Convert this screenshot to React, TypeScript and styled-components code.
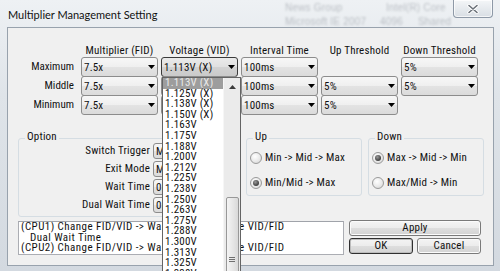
import React from "react";
import styled, { createGlobalStyle } from "styled-components";

const uiFont = `"Liberation Sans Narrow", "Roboto Condensed", "DejaVu Sans Condensed", "Liberation Sans", sans-serif`;

const GlobalStyle = createGlobalStyle`
  html, body {
    margin: 0;
    padding: 0;
  }

  body {
    width: 500px;
    height: 271px;
    overflow: hidden;
    background: #d7dde4;
    font-family: ${uiFont};
    font-size: 11px;
    letter-spacing: 0.2px;
    color: #111;
  }
`;

const Window = styled.div`
  position: relative;
  width: 500px;
  height: 271px;
  box-sizing: border-box;
  display: flex;
  flex-direction: column;
  padding: 0 6px 5px 7px;
  background: linear-gradient(180deg, #eef1f4 0%, #dfe4e9 35%, #d3d9e0 100%);
  overflow: hidden;
`;

const TitleBar = styled.div`
  height: 27px;
  display: flex;
  align-items: flex-start;
  flex: none;
`;

const Title = styled.div`
  flex: none;
  width: 152px;
  padding-left: 1px;
  font-family: "Lato", "Noto Sans", sans-serif;
  font-size: 11px;
  letter-spacing: 0;
  line-height: 29px;
  color: #111;
  white-space: nowrap;
`;

const Backdrop = styled.div`
  flex: 1;
  display: grid;
  grid-template-columns: 125px 95px 1fr;
  grid-auto-rows: 14px;
  padding-top: 1px;
  font-family: "Liberation Sans", sans-serif;
  font-size: 10px;
  line-height: 14px;
  color: #7d838b;
  opacity: 0.45;
  filter: blur(1.3px);
  white-space: nowrap;
  overflow: hidden;
`;

const CloseButton = styled.div`
  flex: none;
  width: 40px;
  height: 18px;
  margin-right: 1px;
  box-sizing: border-box;
  border: 1px solid #8e99a7;
  border-top: none;
  border-radius: 0 0 4px 4px;
  background: linear-gradient(180deg, #f4f6f8 0%, #e6eaee 50%, #d9dee4 100%);
  box-shadow: inset 0 0 0 1px rgba(255, 255, 255, 0.7);
  display: flex;
  align-items: center;
  justify-content: center;
`;

const Client = styled.div`
  flex: 1;
  position: relative;
  box-sizing: border-box;
  border: 1px solid #98a2ad;
  background: #f0f0f0;
  display: flex;
  flex-direction: column;
`;

const SettingsGrid = styled.div`
  display: grid;
  grid-template-columns: 64px repeat(5, 77px);
  grid-template-rows: 13px repeat(3, 19px);
  column-gap: 3px;
  padding: 16px 0 0 6px;
`;

const ColumnHeading = styled.div`
  text-align: center;
  line-height: 13px;
  white-space: nowrap;
`;

const RowLabel = styled.div`
  text-align: right;
  padding-right: 4px;
  line-height: 19px;
  white-space: nowrap;
  letter-spacing: 0;
`;

const Combo = styled.div<{ $focused?: boolean; $height?: number }>`
  position: relative;
  height: ${({ $height }) => $height ?? 20}px;
  box-sizing: border-box;
  border: 1px solid ${({ $focused }) => ($focused ? "#3a3a3a" : "#8c8c8c")};
  border-radius: 3px;
  background: ${({ $focused }) =>
    $focused
      ? "linear-gradient(180deg, #eaeaea 0%, #e0e0e0 50%, #d2d2d2 51%, #cacaca 100%)"
      : "linear-gradient(180deg, #f7f7f7 0%, #efefef 50%, #e3e3e3 51%, #dbdbdb 100%)"};
  display: flex;
  align-items: center;
  padding: 0 2px 0 2px;
  white-space: nowrap;

  span {
    flex: 1;
    overflow: hidden;
  }
`;

const ListPopup = styled.div`
  position: absolute;
  top: calc(100% + 1px);
  left: 0;
  width: 79px;
  height: 200px;
  box-sizing: border-box;
  border: 1px solid #646464;
  background: #fff;
  display: flex;
  z-index: 10;
`;

const Options = styled.ul`
  flex: 1;
  margin: 0;
  padding: 0;
  list-style: none;
  overflow: hidden;
`;

const OptionItem = styled.li<{ $selected?: boolean }>`
  height: 10.6px;
  line-height: 10.6px;
  padding-left: 2px;
  white-space: nowrap;
  background: ${({ $selected }) => ($selected ? "#9d9d9d" : "transparent")};
  color: ${({ $selected }) => ($selected ? "#e9e9e9" : "#111")};
`;

const ScrollBar = styled.div`
  width: 17px;
  flex: none;
  background: #ebebeb;
  border-left: 1px solid #f6f6f6;
  box-sizing: border-box;
  display: flex;
  flex-direction: column;
  align-items: center;
`;

const ScrollArrow = styled.div`
  height: 17px;
  flex: none;
  display: flex;
  align-items: center;
  justify-content: center;
`;

const ScrollThumb = styled.div`
  margin-top: 102px;
  width: 13px;
  height: 130px;
  flex: none;
  box-sizing: border-box;
  border: 1px solid #989898;
  border-radius: 2px;
  background: linear-gradient(90deg, #f4f4f4 0%, #e6e6e6 55%, #d9d9d9 100%);
  display: flex;
  justify-content: center;
  padding-top: 59px;
`;

const GroupRow = styled.div`
  display: flex;
  align-items: flex-start;
  gap: 6px;
  margin: 24px 0 0 10px;
`;

const Group = styled.div<{ $width: number; $height: number }>`
  width: ${({ $width }) => $width}px;
  height: ${({ $height }) => $height}px;
  box-sizing: border-box;
  border: 1px solid #d5dde3;
  border-radius: 3px;
  padding-left: 2px;
`;

const Caption = styled.div`
  width: fit-content;
  margin: -8px 0 0 4px;
  padding: 0 2px;
  line-height: 12px;
  background: #f0f0f0;
`;

const OptionGrid = styled.div`
  display: grid;
  grid-template-columns: 124px 80px;
  grid-auto-rows: 16px;
  column-gap: 3px;
  row-gap: 2px;
  padding-left: 5px;
`;

const OptionLabel = styled.div`
  text-align: right;
  line-height: 16px;
  white-space: nowrap;
`;

const RadioList = styled.div`
  padding-top: 2px;
`;

const RadioRow = styled.label`
  height: 25px;
  display: flex;
  align-items: center;
  gap: 3px;
  padding-left: 1px;
  white-space: nowrap;
`;

const RadioDot = styled.span<{ $checked?: boolean }>`
  width: 12px;
  height: 12px;
  box-sizing: border-box;
  border-radius: 50%;
  border: 1px solid #9a9a9a;
  background: radial-gradient(circle at 40% 35%, #ffffff 0%, #e9e9e9 55%, #cfcfcf 100%);
  display: flex;
  align-items: center;
  justify-content: center;

  &::after {
    content: "";
    width: 6px;
    height: 6px;
    border-radius: 50%;
    background: radial-gradient(circle at 40% 35%, #9a9a9a 0%, #4a4a4a 60%, #2c2c2c 100%);
    display: ${({ $checked }) => ($checked ? "block" : "none")};
  }
`;

const BottomRow = styled.div`
  display: flex;
  align-items: flex-start;
  gap: 5px;
  margin: 3px 0 0 10px;
`;

const LogBox = styled.div`
  margin-top: 1px;
  width: 326px;
  height: 34px;
  box-sizing: border-box;
  border: 1px solid #abadb3;
  border-top-color: #a0a3aa;
  background: #fff;
  padding: 0 0 0 2px;
  overflow: hidden;
  letter-spacing: 0.45px;
`;

const LogLine = styled.div<{ $indent?: boolean }>`
  height: 10.6px;
  line-height: 10.6px;
  white-space: pre;
  padding-left: ${({ $indent }) => ($indent ? 9 : 0)}px;
`;

const ButtonGrid = styled.div`
  display: grid;
  grid-template-columns: 64px 64px;
  grid-auto-rows: 16px;
  column-gap: 4px;
  row-gap: 2px;
`;

const Button = styled.div<{ $wide?: boolean; $default?: boolean }>`
  grid-column: ${({ $wide }) => ($wide ? "1 / span 2" : "auto")};
  box-sizing: border-box;
  border: 1px solid ${({ $default }) => ($default ? "#2f2f2f" : "#7a7a7a")};
  border-radius: 3px;
  background: linear-gradient(180deg, #f4f4f4 0%, #ececec 50%, #dedede 51%, #d3d3d3 100%);
  box-shadow: inset 0 0 0 1px ${({ $default }) => ($default ? "#bcbcbc" : "#fbfbfb")};
  text-align: center;
  line-height: 14px;
  white-space: nowrap;
`;

const voltages = [
  "1.113V (X)",
  "1.125V (X)",
  "1.138V (X)",
  "1.150V (X)",
  "1.163V",
  "1.175V",
  "1.188V",
  "1.200V",
  "1.212V",
  "1.225V",
  "1.238V",
  "1.250V",
  "1.263V",
  "1.275V",
  "1.288V",
  "1.300V",
  "1.313V",
  "1.325V",
  "1.338V",
  "1.350V",
];

const DropArrow = () => (
  <svg width="7" height="4" viewBox="0 0 7 4">
    <path d="M0 0h7L3.5 4z" fill="#000" />
  </svg>
);

function ComboBox({
  value,
  focused,
  height,
  children,
}: {
  value: string;
  focused?: boolean;
  height?: number;
  children?: React.ReactNode;
}) {
  return (
    <Combo $focused={focused} $height={height}>
      <span>{value}</span>
      <DropArrow />
      {children}
    </Combo>
  );
}

function VoltageList() {
  return (
    <ListPopup>
      <Options>
        {voltages.map((v, i) => (
          <OptionItem key={v} $selected={i === 0}>
            {v}
          </OptionItem>
        ))}
      </Options>
      <ScrollBar>
        <ScrollArrow>
          <svg width="7" height="4" viewBox="0 0 7 4">
            <path d="M0 4h7L3.5 0z" fill="#3c3c3c" />
          </svg>
        </ScrollArrow>
        <ScrollThumb>
          <svg width="6" height="6" viewBox="0 0 6 6">
            <path d="M0 0.5h6M0 2.5h6M0 4.5h6" stroke="#6f6f6f" strokeWidth="1" />
          </svg>
        </ScrollThumb>
      </ScrollBar>
    </ListPopup>
  );
}

function App() {
  return (
    <>
      <GlobalStyle />
      <Window>
        <TitleBar>
          <Title>Multiplier Management Setting</Title>
          <Backdrop>
            <span></span>
            <span>News Group</span>
            <span>&nbsp;&nbsp;Intel(R) Core</span>
            <span></span>
            <span>Microsoft IE 2007</span>
            <span>4096&nbsp;&nbsp;&nbsp;&nbsp;&nbsp;Shared</span>
          </Backdrop>
          <CloseButton>
            <svg width="12" height="10" viewBox="0 0 12 10">
              <path d="M2 1.5l8 7M10 1.5l-8 7" stroke="#ffffff" strokeWidth="3.4" strokeLinecap="round" />
              <path d="M2 1.5l8 7M10 1.5l-8 7" stroke="#6a7078" strokeWidth="1.6" strokeLinecap="round" />
            </svg>
          </CloseButton>
        </TitleBar>

        <Client>
          <SettingsGrid>
            <span />
            <ColumnHeading>Multiplier (FID)</ColumnHeading>
            <ColumnHeading>Voltage (VID)</ColumnHeading>
            <ColumnHeading>Interval Time</ColumnHeading>
            <ColumnHeading>Up Threshold</ColumnHeading>
            <ColumnHeading>Down Threshold</ColumnHeading>

            <RowLabel>Maximum</RowLabel>
            <ComboBox value="7.5x" />
            <ComboBox value="1.113V (X)" focused>
              <VoltageList />
            </ComboBox>
            <ComboBox value="100ms" />
            <span />
            <ComboBox value="5%" />

            <RowLabel>Middle</RowLabel>
            <ComboBox value="7.5x" />
            <ComboBox value="1.113V (X)" />
            <ComboBox value="100ms" />
            <ComboBox value="5%" />
            <ComboBox value="5%" />

            <RowLabel>Minimum</RowLabel>
            <ComboBox value="7.5x" />
            <ComboBox value="1.113V (X)" />
            <ComboBox value="100ms" />
            <ComboBox value="5%" />
            <span />
          </SettingsGrid>

          <GroupRow>
            <Group $width={222} $height={79}>
              <Caption>Option</Caption>
              <OptionGrid>
                <OptionLabel>Switch Trigger</OptionLabel>
                <ComboBox value="Max Load" height={16} />
                <OptionLabel>Exit Mode</OptionLabel>
                <ComboBox value="Min" height={16} />
                <OptionLabel>Wait Time</OptionLabel>
                <ComboBox value="0ms" height={16} />
                <OptionLabel>Dual Wait Time</OptionLabel>
                <ComboBox value="0ms" height={16} />
              </OptionGrid>
            </Group>
            <Group $width={116} $height={58}>
              <Caption>Up</Caption>
              <RadioList>
                <RadioRow>
                  <RadioDot />
                  Min -&gt; Mid -&gt; Max
                </RadioRow>
                <RadioRow>
                  <RadioDot $checked />
                  Min/Mid -&gt; Max
                </RadioRow>
              </RadioList>
            </Group>
            <Group $width={116} $height={58}>
              <Caption>Down</Caption>
              <RadioList>
                <RadioRow>
                  <RadioDot $checked />
                  Max -&gt; Mid -&gt; Min
                </RadioRow>
                <RadioRow>
                  <RadioDot />
                  Max/Mid -&gt; Min
                </RadioRow>
              </RadioList>
            </Group>
          </GroupRow>

          <BottomRow>
            <LogBox>
              <LogLine>(CPU1) Change FID/VID -&gt; Wait Time -&gt; Change VID/FID</LogLine>
              <LogLine $indent>Dual Wait Time</LogLine>
              <LogLine>(CPU2) Change FID/VID -&gt; Wait Time -&gt; Change VID/FID</LogLine>
            </LogBox>
            <ButtonGrid>
              <Button $wide>Apply</Button>
              <Button $default>OK</Button>
              <Button>Cancel</Button>
            </ButtonGrid>
          </BottomRow>
        </Client>
      </Window>
    </>
  );
}

export default App;
